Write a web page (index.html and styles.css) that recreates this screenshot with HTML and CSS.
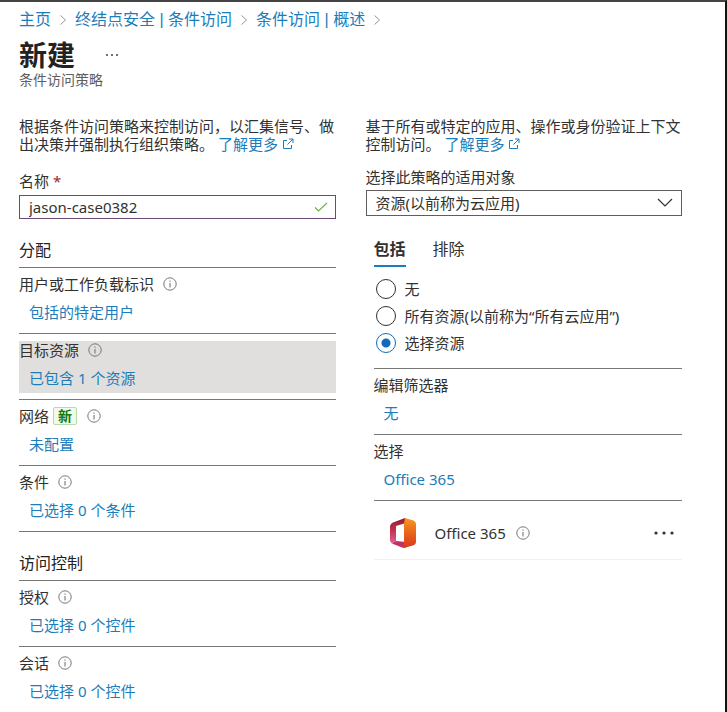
FILE: index.html
```html
<!DOCTYPE html>
<html lang="zh-CN">
<head>
  <meta charset="UTF-8" />
  <meta name="viewport" content="width=device-width, initial-scale=1.0"/>
  <title>新建 - 条件访问策略</title>
  <link rel="stylesheet" href="styles.css">
</head>
<body>

  <!-- shared icons -->
  <svg class="sprite" aria-hidden="true">
    <symbol id="icon-info" viewBox="0 0 14 14">
      <circle cx="7" cy="7" r="6.2" fill="none" stroke="currentColor" stroke-width="1"/>
      <path d="M7 6v4.4M7 3.6v1.2" stroke="currentColor" stroke-width="1.1"/>
    </symbol>
    <symbol id="icon-external" viewBox="0 0 12 12">
      <path d="M5 2.5H1.5v8h8V7M7 1h4v4M11 1L5.5 6.5" fill="none" stroke="currentColor" stroke-width="1"/>
    </symbol>
    <symbol id="icon-chevron" viewBox="0 0 8 12">
      <path d="M1.5 1.5L6.5 6l-5 4.5" fill="none" stroke="currentColor" stroke-width="1"/>
    </symbol>
  </svg>

  <div class="page">
    <header class="header">
      <nav class="breadcrumb">
        <a href="#">主页</a>
        <svg><use href="#icon-chevron"/></svg>
        <a href="#">终结点安全 | 条件访问</a>
        <svg><use href="#icon-chevron"/></svg>
        <a href="#">条件访问 | 概述</a>
        <svg><use href="#icon-chevron"/></svg>
      </nav>
      <div class="title-row">
        <h1>新建</h1>
        <button class="more-btn" type="button" aria-label="更多">
          <svg width="14" height="4" viewBox="0 0 14 4" fill="currentColor"><circle cx="2" cy="2" r="0.9"/><circle cx="7" cy="2" r="0.9"/><circle cx="12" cy="2" r="0.9"/></svg>
        </button>
      </div>
      <p class="subtitle">条件访问策略</p>
    </header>

    <main class="columns">
      <section class="policy">
        <p class="description">根据条件访问策略来控制访问，以汇集信号、做出决策并强制执行组织策略。 <a href="#">了解更多 <svg class="external"><use href="#icon-external"/></svg></a></p>

        <label class="field-label name-label" for="policy-name">名称 <span class="required">*</span></label>
        <div class="text-field">
          <input type="text" id="policy-name" value="jason-case0382" />
          <svg class="check" viewBox="0 0 14 10"><path d="M1 5.5L4.5 9 13 1" fill="none" stroke="currentColor" stroke-width="1.2"/></svg>
        </div>

        <h2>分配</h2>
        <div class="setting">
          <div class="setting-body">
            <div class="setting-label">用户或工作负载标识 <svg class="info"><use href="#icon-info"/></svg></div>
            <a href="#">包括的特定用户</a>
          </div>
        </div>
        <div class="setting selected">
          <div class="setting-body">
            <div class="setting-label">目标资源 <svg class="info"><use href="#icon-info"/></svg></div>
            <a href="#">已包含 1 个资源</a>
          </div>
        </div>
        <div class="setting">
          <div class="setting-body">
            <div class="setting-label with-badge">网络 <span class="badge">新</span> <svg class="info"><use href="#icon-info"/></svg></div>
            <a href="#">未配置</a>
          </div>
        </div>
        <div class="setting">
          <div class="setting-body">
            <div class="setting-label">条件 <svg class="info"><use href="#icon-info"/></svg></div>
            <a href="#">已选择 0 个条件</a>
          </div>
        </div>

        <h2 class="ruled">访问控制</h2>
        <div class="setting">
          <div class="setting-body">
            <div class="setting-label">授权 <svg class="info"><use href="#icon-info"/></svg></div>
            <a href="#">已选择 0 个控件</a>
          </div>
        </div>
        <div class="setting">
          <div class="setting-body">
            <div class="setting-label">会话 <svg class="info"><use href="#icon-info"/></svg></div>
            <a href="#">已选择 0 个控件</a>
          </div>
        </div>
      </section>

      <section class="resources">
        <p class="description">基于所有或特定的应用、操作或身份验证上下文控制访问。 <a href="#">了解更多 <svg class="external"><use href="#icon-external"/></svg></a></p>

        <label class="field-label" for="applies-to">选择此策略的适用对象</label>
        <div class="select-field">
          <select id="applies-to">
            <option>资源(以前称为云应用)</option>
          </select>
          <svg class="arrow" viewBox="0 0 16 9"><path d="M1 1l7 7 7-7" fill="none" stroke="currentColor" stroke-width="1.2"/></svg>
        </div>

        <div class="panel">
          <div class="tabs" role="tablist">
            <button class="tab active" type="button" role="tab" aria-selected="true">包括</button>
            <button class="tab" type="button" role="tab" aria-selected="false">排除</button>
          </div>

          <div class="radios">
            <label><input type="radio" name="scope" value="none" />无</label>
            <label><input type="radio" name="scope" value="all" />所有资源(以前称为“所有云应用”)</label>
            <label><input type="radio" name="scope" value="select" checked />选择资源</label>
          </div>

          <div class="setting">
            <div class="setting-body">
              <div class="setting-label">编辑筛选器</div>
              <a href="#">无</a>
            </div>
          </div>
          <div class="setting">
            <div class="setting-body">
              <div class="setting-label">选择</div>
              <a href="#">Office 365</a>
            </div>
          </div>

          <div class="app-row">
            <svg class="office-logo" viewBox="0 0 26 30">
              <defs>
                <linearGradient id="office-left" x1="0" y1="0" x2="0" y2="1">
                  <stop offset="0" stop-color="#8c1d2c"/>
                  <stop offset="0.5" stop-color="#c5334c"/>
                  <stop offset="1" stop-color="#e0609a"/>
                </linearGradient>
                <linearGradient id="office-right" x1="0" y1="0" x2="0" y2="1">
                  <stop offset="0" stop-color="#f59a1c"/>
                  <stop offset="0.5" stop-color="#e8641b"/>
                  <stop offset="1" stop-color="#d8391d"/>
                </linearGradient>
              </defs>
              <path d="M15 0L3 4.500Q0 6 0 9v13q0 2.500 2 3.500l4-2.500V8l10-3z" fill="url(#office-left)"/>
              <path d="M2 25.500l10 4q2 .8 4-.2V24L6 23z" fill="#c0306a"/>
              <path d="M15 0l8.500 2.500Q26 3.500 26 6v18q0 2.500-2.500 3.300L14 30V24.500V5.500z" fill="url(#office-right)"/>
            </svg>
            <span class="app-name">Office 365</span>
            <svg class="info"><use href="#icon-info"/></svg>
            <button class="more-btn row-more" type="button" aria-label="更多">
              <svg width="20" height="4" viewBox="0 0 20 4" fill="currentColor"><circle cx="2" cy="2" r="1.600"/><circle cx="10" cy="2" r="1.600"/><circle cx="18" cy="2" r="1.600"/></svg>
            </button>
          </div>
        </div>
      </section>
    </main>
  </div>

</body>
</html>
```
FILE: styles.css
```css
* {
  box-sizing: border-box;
}

body {
  margin: 0;
  background: #fff;
  color: #323130;
  font-family: "Noto Sans", "Noto Sans CJK SC", sans-serif;
  font-size: 15px;
  line-height: 18px;
}

a {
  display: inline-block;
  color: #1b7dba;
  text-decoration: none;
}

a:hover {
  text-decoration: underline;
}

h1, h2, p {
  margin: 0;
}

button, input, select {
  font: inherit;
  color: inherit;
}

.sprite {
  display: none;
}

.page {
  min-height: 100vh;
  padding: 8px 43px 0 19px;
  border-top: 2px solid #444;
  border-right: 2px solid #111;
}

/* header */
.breadcrumb {
  display: flex;
  align-items: center;
  gap: 8px;
  font-family: "Liberation Sans", "Noto Sans CJK SC", sans-serif;
  font-size: 16px;
  line-height: 20px;
}

.breadcrumb svg {
  width: 8px;
  height: 12px;
  color: #999;
}

.title-row {
  display: flex;
  align-items: center;
  gap: 30px;
  margin-top: 9px;
}

h1 {
  font-size: 28px;
  line-height: 32px;
  font-weight: 600;
  color: #222;
}

.subtitle {
  margin-top: 1px;
  font-size: 14px;
  line-height: 16px;
  color: #605e5c;
}

.more-btn {
  display: flex;
  padding: 0;
  border: none;
  background: none;
  cursor: pointer;
}

/* columns */
.columns {
  display: grid;
  grid-template-columns: 1fr 1fr;
  gap: 30px;
  margin-top: 29px;
}

.external {
  width: 12px;
  height: 12px;
}

.field-label {
  display: block;
  margin-top: 15px;
}

.name-label {
  margin-top: 19px;
}

.required {
  color: #a4262c;
}

.text-field, .select-field {
  position: relative;
  margin-top: 4px;
}

.text-field {
  margin-top: 5px;
}

.text-field input {
  display: block;
  width: 100%;
  height: 24px;
  padding: 0 32px 0 9px;
  border: 1px solid #6b4a78;
  background: #fff;
}

.check {
  position: absolute;
  top: 7px;
  right: 8px;
  width: 14px;
  height: 10px;
  color: #6bb344;
}

.select-field select {
  display: block;
  width: 100%;
  height: 26px;
  padding: 0 32px 0 9px;
  border: 1px solid #605e5c;
  border-radius: 0;
  background: #fff;
  appearance: none;
}

.arrow {
  position: absolute;
  top: 8px;
  right: 9px;
  width: 16px;
  height: 9px;
  pointer-events: none;
}

h2 {
  padding: 21px 0 7px;
  font-size: 16px;
  line-height: 20px;
  font-weight: 400;
  color: #222;
}

h2.ruled {
  border-top: 1px solid #797775;
}

/* settings list */
.setting {
  padding: 7px 0 6px;
  border-top: 1px solid #797775;
}

.setting-body {
  display: flex;
  flex-direction: column;
  align-items: flex-start;
  gap: 10px;
  padding-bottom: 6px;
}

.setting-body > a {
  margin-left: 10px;
}

.selected .setting-body {
  background: #e1dfdd;
}

.setting-label {
  display: flex;
  align-items: center;
  gap: 9px;
}

.with-badge {
  gap: 4px;
}

.with-badge .info {
  margin-left: 6px;
}

.info {
  width: 14px;
  height: 14px;
  color: #797775;
}

.badge {
  padding: 0 4px;
  border: 1px solid #b5dba8;
  border-radius: 2px;
  background: #f1faec;
  color: #107c10;
  font-size: 14px;
  line-height: 16px;
  font-weight: 700;
}

/* right panel */
.panel {
  margin-left: 8px;
}

.tabs {
  display: flex;
  gap: 27px;
  padding-top: 23px;
}

.tab {
  padding: 0 0 6px;
  border: none;
  border-bottom: 2px solid transparent;
  background: none;
  font-size: 16px;
  line-height: 20px;
  cursor: pointer;
}

.tab.active {
  border-bottom-color: #1b7dba;
  font-weight: 600;
}

.radios {
  display: flex;
  flex-direction: column;
  gap: 7px;
  padding: 12px 0 15px 2px;
}

.radios label {
  display: flex;
  align-items: center;
  gap: 9px;
  line-height: 20px;
}

.radios input {
  width: 20px;
  height: 20px;
  margin: 0;
  border: 1px solid #323130;
  border-radius: 50%;
  appearance: none;
}

.radios input:checked {
  border-color: #0f6cbd;
  background: radial-gradient(circle, #0f6cbd 4px, transparent 5px);
}

.app-row {
  display: flex;
  align-items: center;
  padding: 17px 8px 11px 16px;
  border-top: 1px solid #797775;
  border-bottom: 1px solid #f3f2f1;
}

.office-logo {
  width: 26px;
  height: 30px;
}

.app-name {
  margin: 0 10px 0 19px;
}

.row-more {
  margin-left: auto;
}
```
